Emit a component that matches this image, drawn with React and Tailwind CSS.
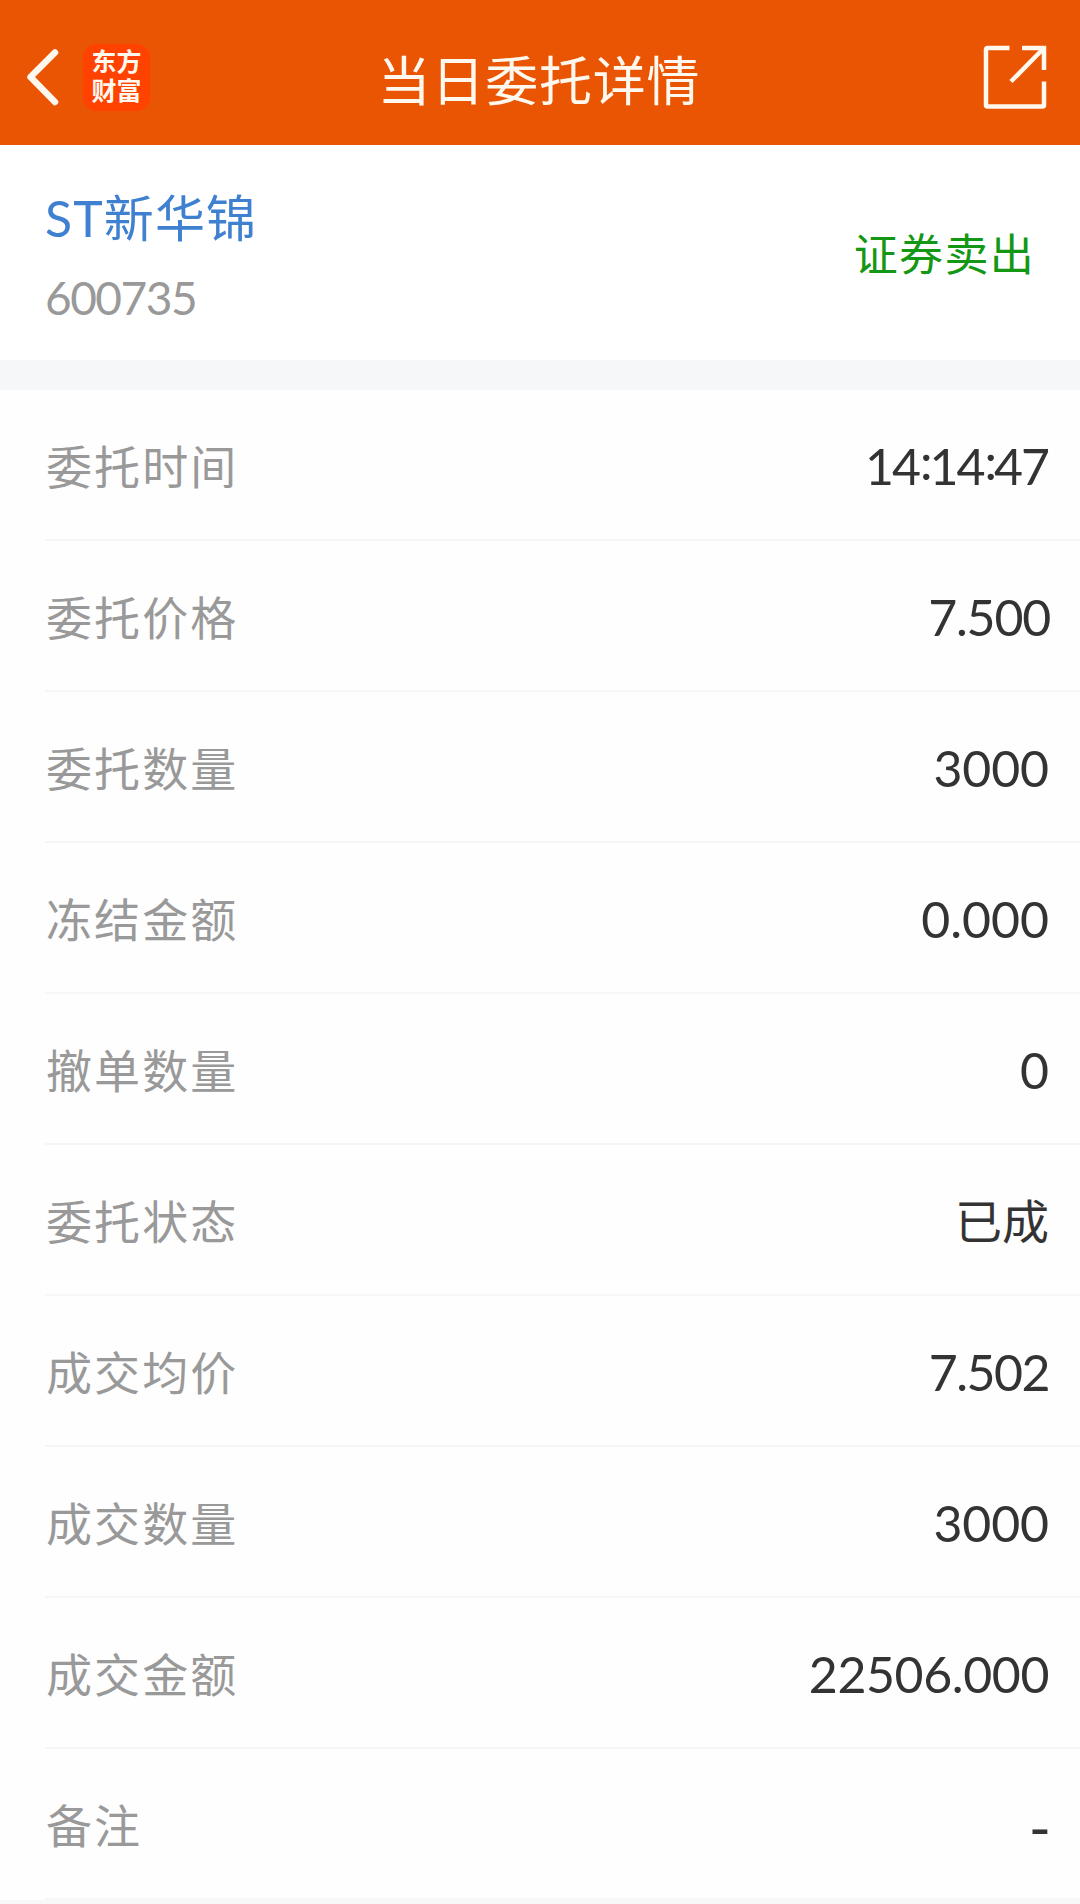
const rows = [
  { label: "委托时间", value: "14:14:47", style: "text-[50px] tracking-[-2px] mr-[2px] pt-[3px]" },
  { label: "委托价格", value: "7.500", style: "text-[50px] tracking-[-1.2px] mr-0 pt-[3px]" },
  { label: "委托数量", value: "3000", style: "text-[50px] tracking-[-0.1px] mr-[1px] pt-[3px]" },
  { label: "冻结金额", value: "0.000", style: "text-[50px] tracking-[0px] mr-[1px] pt-[3px]" },
  { label: "撤单数量", value: "0", style: "text-[50px] tracking-[0px] mr-[1px] pt-[3px]" },
  { label: "委托状态", value: "已成", style: "text-[47px] tracking-[0px] mr-[1px] pt-[4px]" },
  { label: "成交均价", value: "7.502", style: "text-[50px] tracking-[-1.5px] mr-[1px] pt-[3px]" },
  { label: "成交数量", value: "3000", style: "text-[50px] tracking-[-0.1px] mr-[1px] pt-[3px]" },
  { label: "成交金额", value: "22506.000", style: "text-[50px] tracking-[-0.4px] mr-[1px] pt-[3px]" },
  { label: "备注", value: "-", style: "text-[60px] tracking-[0px] mr-[-1px] pt-[7px]" },
]

function Header() {
  return (
    <header className="grid h-[144.500px] grid-cols-3 items-center bg-[#ea5504] pt-[10px] text-[#fff8ee]">
      <div className="flex items-center">
        <svg className="ml-6 h-16 w-10" viewBox="0 0 40 64" fill="none" stroke="currentColor" strokeWidth="6.5" strokeLinecap="round" strokeLinejoin="round">
          <path d="M31 7.500 6.500 32l24.500 25" />
        </svg>
        <div className="ml-[19px] flex h-[67px] w-[67px] flex-col items-center justify-center rounded-[14px] bg-[#ff4200] pb-[2px] text-[25px] leading-[29px] font-bold">
          <span>东方</span>
          <span>财富</span>
        </div>
      </div>
      <h1 className="pt-[6px] pr-[2px] text-center text-[53px] leading-none tracking-[0.8px] whitespace-nowrap">当日委托详情</h1>
      <svg className="mr-[33px] h-16 w-16 justify-self-end" viewBox="0 0 64 64" fill="none" stroke="currentColor" strokeWidth="4.5" strokeLinejoin="round">
        <path d="M26.500 3H4.500a1.500 1.500 0 0 0-1.500 1.500V60a1.500 1.500 0 0 0 1.500 1.500H59.500a1.500 1.500 0 0 0 1.500-1.500V36.500" />
        <path d="M39 3h22V25" strokeLinejoin="miter" />
        <path d="M60.500 3.500 28 36.500" />
      </svg>
    </header>
  )
}

// Colons sit centred on the digits
function Value({ text }) {
  return text.split(":").map((part, i) => (
    <span key={i}>
      {i > 0 && <span className="relative -top-[5px] mr-[-1px] ml-[1px]">:</span>}
      {part}
    </span>
  ))
}

function Row({ label, value, style }) {
  return (
    <div>
      <div className="flex h-[149px] items-center justify-between pr-[30px] pl-[46px]">
        <span className="pt-[5px] text-[46px] leading-none tracking-[2.1px] text-[#999]">{label}</span>
        <span className={`${style} leading-none text-[#333]`}>
          <Value text={value} />
        </span>
      </div>
      <div className="ml-[45px] h-[2px] bg-[#f6f6f7]" />
    </div>
  )
}

export default function App() {
  return (
    <div className="flex h-[1904px] w-[1080px] flex-col overflow-hidden bg-[#f6f7f9] font-[Lato,'Noto_Sans_CJK_SC',sans-serif]">
      <Header />

      {/* Stock */}
      <section className="flex h-[215px] items-center justify-between bg-white pr-[45px] pl-[45px]">
        <div className="pt-[11px]">
          <p className="text-[50px] leading-[80px] tracking-[1.1px] text-[#3f80d1]">ST新华锦</p>
          <p className="text-[46px] leading-[80px] tracking-[-1.5px] text-[#999]">600735</p>
        </div>
        <p className="pt-[4px] text-[44px] leading-none tracking-[1.3px] text-[#149714]">证券卖出</p>
      </section>

      {/* Order details */}
      <section className="mt-[30px] bg-[#fefefe]">
        {rows.map((row) => (
          <Row key={row.label} {...row} />
        ))}
      </section>
    </div>
  )
}
